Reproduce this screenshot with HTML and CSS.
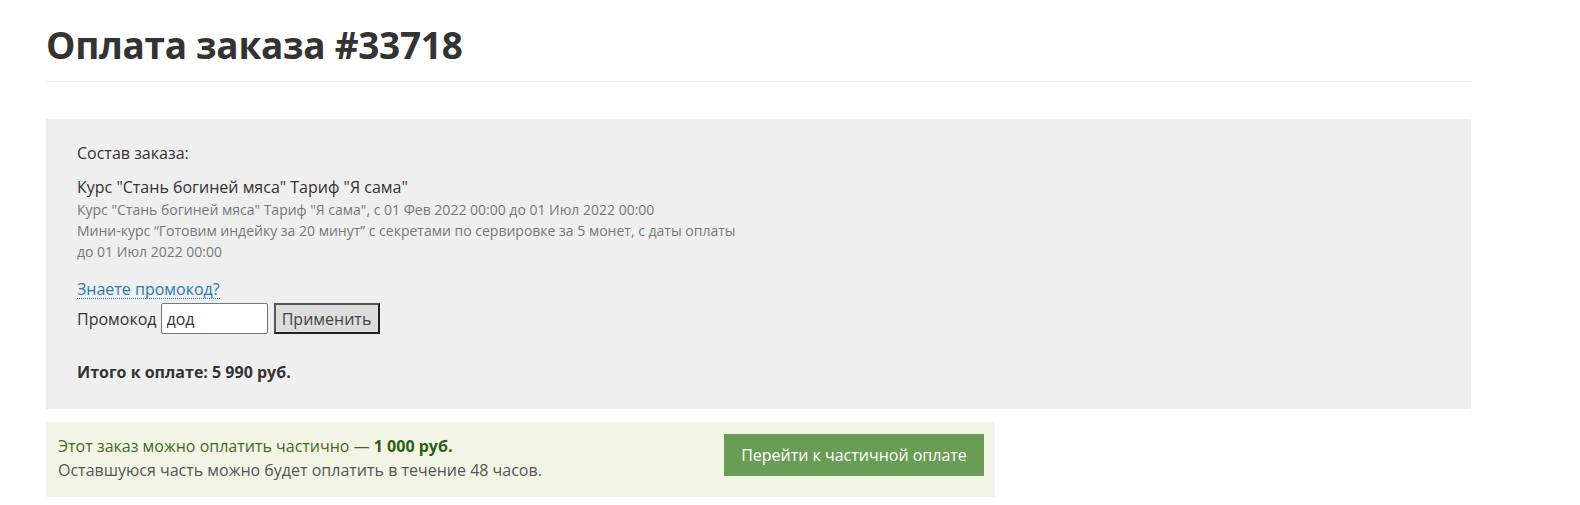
FILE: index.html
```html
<!DOCTYPE html>
<html lang="ru">
<head>
    <meta charset="UTF-8">
    <title>Оплата заказа #33718</title>
    <link rel="stylesheet" href="styles.css">
</head>
<body>
    <div class="page">
        <h1 class="page-title">Оплата заказа #33718</h1>

        <div class="order-box">
            <p class="order-label">Состав заказа:</p>
            <p class="order-item">Курс "Стань богиней мяса" Тариф "Я сама"</p>
            <p class="order-note">Курс "Стань богиней мяса" Тариф "Я сама", с 01 Фев 2022 00:00 до 01 Июл 2022 00:00</p>
            <p class="order-note">Мини-курс “Готовим индейку за 20 минут” с секретами по сервировке за 5 монет, с даты оплаты<br>до 01 Июл 2022 00:00</p>

            <a class="promo-link" href="#">Знаете промокод?</a>
            <form class="promo-form">
                <label for="promo">Промокод</label>
                <input id="promo" type="text" value="дод">
                <button type="button" class="promo-btn">Применить</button>
            </form>

            <p class="order-total">Итого к оплате: 5 990 руб.</p>
        </div>

        <div class="partial-box">
            <div class="partial-text">
                <p class="partial-line">Этот заказ можно оплатить частично — <b>1 000 руб.</b></p>
                <p class="partial-sub">Оставшуюся часть можно будет оплатить в течение 48 часов.</p>
            </div>
            <a class="partial-btn" href="#">Перейти к частичной оплате</a>
        </div>
    </div>
</body>
</html>
```

FILE: styles.css
```css
* {
    margin: 0;
    padding: 0;
    box-sizing: border-box;
}

body {
    font-family: "Open Sans", "Noto Sans", sans-serif;
    color: #333;
    background: #fff;
}

.page {
    width: 1425px;
    margin-left: 46px;
}

/* Header */
.page-title {
    font-size: 37px;
    font-weight: 700;
    line-height: 46px;
    color: #333;
    padding-top: 22px;
    padding-bottom: 13px;
    border-bottom: 1px solid #ececec;
    letter-spacing: -0.3px;
}

/* Order details */
.order-box {
    margin-top: 37px;
    background: #efefef;
    padding: 24px 31px 0;
    height: 290px;
}

.order-label {
    font-size: 16px;
    line-height: 20px;
    margin-bottom: 14px;
}

.order-item {
    font-size: 16px;
    line-height: 20px;
    margin-bottom: 2px;
}

.order-note {
    font-size: 14px;
    line-height: 21px;
    color: #777;
}

.promo-link {
    display: inline-block;
    margin-top: 18px;
    font-size: 16px;
    line-height: 18px;
    color: #2b7ab5;
    text-decoration: none;
    border-bottom: 1px dotted #1a73c9;
}

.promo-form {
    display: flex;
    align-items: center;
    font-size: 16px;
    margin-top: 3px;
}

.promo-form label {
    margin-right: 4px;
}

.promo-form input {
    width: 107px;
    height: 31px;
    border: 1px solid #767676;
    border-radius: 2px;
    padding: 0 5px;
    font-family: inherit;
    font-size: 16px;
    color: #333;
    background: #fff;
}

.promo-btn {
    margin-left: 6px;
    width: 106px;
    height: 31px;
    border: 2px solid #222;
    border-left-color: #555;
    border-top-color: #555;
    background: #ddd;
    font-family: inherit;
    font-size: 16px;
    color: #444;
}

.order-total {
    margin-top: 28px;
    font-size: 16px;
    font-weight: 700;
    line-height: 20px;
}

/* Partial payment */
.partial-box {
    width: 949px;
    height: 75px;
    margin-top: 13px;
    background: #f2f5e6;
    padding: 12px 11px 0 12px;
    display: flex;
    justify-content: space-between;
    align-items: flex-start;
}

.partial-line {
    font-size: 16px;
    line-height: 24px;
    color: #3e6c1f;
}

.partial-line b {
    color: #2f5d10;
}

.partial-sub {
    font-size: 16px;
    line-height: 24px;
    color: #555;
}

.partial-btn {
    width: 260px;
    height: 42px;
    background: #699c55;
    color: #fff;
    font-size: 16px;
    text-decoration: none;
    display: flex;
    align-items: center;
    justify-content: center;
}
```
